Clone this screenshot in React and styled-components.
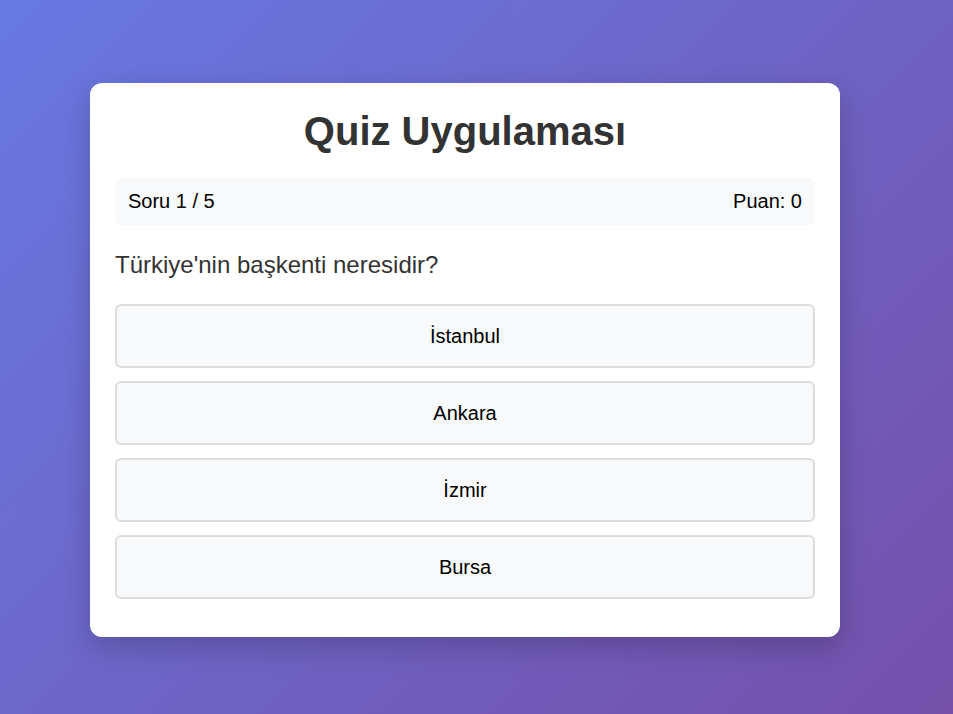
import React from "react";
import styled, { createGlobalStyle } from "styled-components";

const GlobalStyle = createGlobalStyle`
  html, body {
    margin: 0;
    padding: 0;
  }
  body {
    font-family: "Liberation Sans", Arial, sans-serif;
    background: linear-gradient(135deg, #667eea -12%, #764ba2 112%);
    min-height: 100vh;
  }
`;

const Page = styled.main`
  box-sizing: border-box;
  min-height: 100vh;
  padding: 83px 0 0 90px;
`;

const Card = styled.section`
  box-sizing: border-box;
  width: 750px;
  background: #ffffff;
  border-radius: 12px;
  padding: 25px;
  box-shadow: 0 10px 30px rgba(0, 0, 0, 0.2);
`;

const Title = styled.h1`
  margin: 0 0 24px;
  font-size: 40px;
  line-height: 46px;
  font-weight: 700;
  color: #333333;
  text-align: center;
`;

const Stats = styled.div`
  display: flex;
  justify-content: space-between;
  align-items: center;
  padding: 12px 13px;
  background: #f8f9fa;
  border-radius: 7px;
  font-size: 20px;
  line-height: 23px;
  color: #000000;
`;

const Question = styled.p`
  margin: 26px 0 25px;
  font-size: 24px;
  line-height: 28px;
  color: #333333;
`;

const Options = styled.div`
  display: flex;
  flex-direction: column;
  gap: 13px;
  margin-bottom: 13px;
`;

const Option = styled.button`
  box-sizing: border-box;
  width: 100%;
  height: 64px;
  padding: 0 18px;
  background: #f8f9fa;
  border: 2px solid #dddddd;
  border-radius: 6px;
  font-family: "Liberation Sans", Arial, sans-serif;
  font-size: 20px;
  line-height: 24px;
  color: #000000;
  text-align: center;
  cursor: pointer;
`;

const options = ["İstanbul", "Ankara", "İzmir", "Bursa"];

export default function App() {
  return (
    <>
      <GlobalStyle />
      <Page>
        <Card>
          <Title>Quiz Uygulaması</Title>
          <Stats>
            <span>Soru 1 / 5</span>
            <span>Puan: 0</span>
          </Stats>
          <Question>Türkiye'nin başkenti neresidir?</Question>
          <Options>
            {options.map((o) => (
              <Option key={o}>{o}</Option>
            ))}
          </Options>
        </Card>
      </Page>
    </>
  );
}
